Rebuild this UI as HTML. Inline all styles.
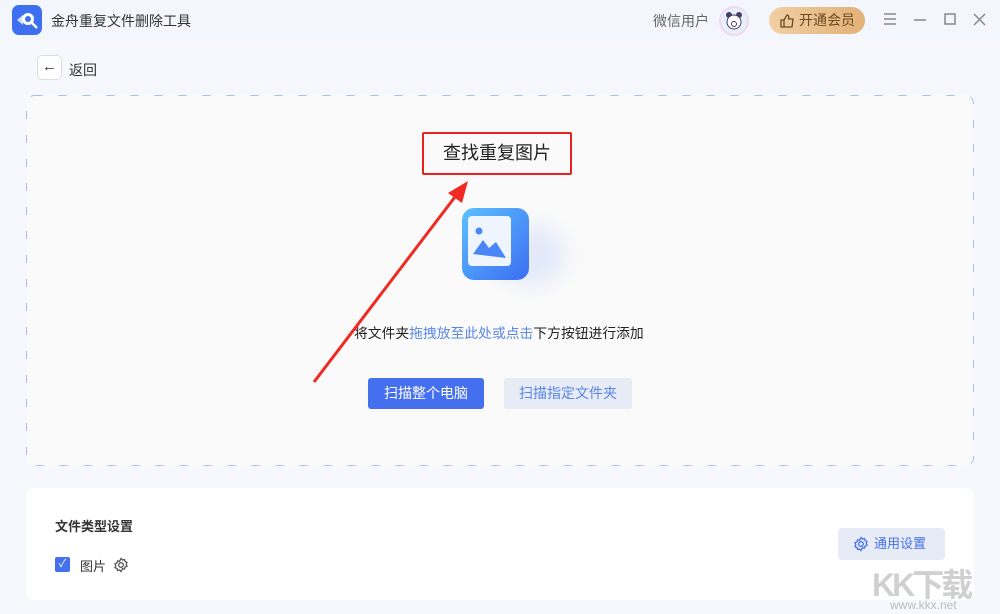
<!DOCTYPE html>
<html><head><meta charset="utf-8"><style>
*{margin:0;padding:0;box-sizing:border-box}
body{width:1000px;height:614px;background:#f6f8fd;font-family:"Liberation Sans","Noto Sans CJK SC",sans-serif;position:relative;overflow:hidden;color:#222}
.abs{position:absolute}
</style></head><body>
<div class="abs" style="left:0;top:0;width:1000px;height:40px;background:#f3f7fd"></div>
<div class="abs" style="left:12px;top:5px;width:30px;height:30px;border-radius:7px;background:#3d6ff0"></div>
<svg class="abs" style="left:12px;top:5px" width="30" height="30"><path d="M5 15 L11 10 L11 20 Z" fill="#cfe0ff"/><circle cx="16" cy="14" r="6" fill="#fff"/><circle cx="16" cy="14" r="3" fill="#3d6ff0"/><path d="M20 18 L25 23" stroke="#fff" stroke-width="2.5"/></svg>
<div class="abs" style="left:51px;top:11px;font-size:14px;color:#333">金舟重复文件删除工具</div>
<div class="abs" style="left:653px;top:11px;font-size:14px;color:#666">微信用户</div>
<div class="abs" style="left:719px;top:6px;width:30px;height:30px;border-radius:50%;background:#e4f0fb;border:2px solid #f4d8ea"></div>
<svg class="abs" style="left:719px;top:6px" width="30" height="30"><circle cx="10" cy="9" r="3" fill="#4a3a6a"/><circle cx="20" cy="9" r="3" fill="#4a3a6a"/><ellipse cx="15" cy="16" rx="7" ry="7" fill="#fff" stroke="#4a3a6a" stroke-width="1"/><circle cx="15" cy="18" r="2.5" fill="none" stroke="#4a3a6a"/></svg>
<div class="abs" style="left:769px;top:7px;width:96px;height:27px;border-radius:14px;background:linear-gradient(90deg,#f1cfa3,#e2b177);color:#6b4a22;font-size:14px;line-height:27px;padding-left:30px">开通会员</div>
<svg class="abs" style="left:779px;top:13px" width="16" height="16"><path d="M2 7h3v7H2zM5 7l3-5c2 0 2 2 1.5 4H14l-1 8H5" fill="none" stroke="#6b4a22" stroke-width="1.3"/></svg>
<svg class="abs" style="left:882px;top:12px" width="110" height="16" stroke="#888" stroke-width="1.5" fill="none"><path d="M2 2h12M2 7h12M2 12h12"/><path d="M32 8h12"/><rect x="63" y="2" width="10" height="10"/><path d="M92 2l11 11M103 2l-11 11"/></svg>
<div class="abs" style="left:37px;top:55px;width:25px;height:25px;border-radius:5px;background:#fff;border:1px solid #ddd;text-align:center;line-height:22px;font-size:15px;color:#333">←</div>
<div class="abs" style="left:69px;top:60px;font-size:14px;color:#333">返回</div>
<div class="abs" style="left:26px;top:95px;width:948px;height:371px;background:#fafafa;border-radius:8px"></div>
<svg class="abs" style="left:26px;top:95px" width="948" height="371"><rect x="0.5" y="0.5" width="947" height="370" rx="8" fill="none" stroke="#a4bdf5" stroke-dasharray="8 16"/></svg>
<div class="abs" style="left:422px;top:132px;width:150px;height:43px;border:2px solid #e8221f;border-radius:2px;text-align:center;line-height:39px;font-size:18px;color:#222">查找重复图片</div>
<div class="abs" style="left:495px;top:225px;width:70px;height:60px;border-radius:50%;background:#e3e9fa;filter:blur(10px)"></div>
<div class="abs" style="left:462px;top:208px;width:67px;height:72px;border-radius:12px;background:linear-gradient(135deg,#5cc0ff,#3c6ef2)"></div>
<div class="abs" style="left:468px;top:216px;width:43px;height:50px;border-radius:4px;background:#eef5ff"></div>
<svg class="abs" style="left:468px;top:216px" width="43" height="50"><circle cx="11" cy="15" r="3.5" fill="#4a86f5"/><path d="M5 38 L15 24 L21 32 L28 26 L38 42 Z" fill="#4a86f5"/></svg>
<div class="abs" style="left:354px;top:322px;font-size:13.8px;color:#222;white-space:nowrap">将文件夹<span style="color:#5b86e5">拖拽放至此处或点击</span>下方按钮进行添加</div>
<div class="abs" style="left:368px;top:378px;width:116px;height:31px;border-radius:3px;background:#4470ef;color:#fff;font-size:14px;text-align:center;line-height:31px">扫描整个电脑</div>
<div class="abs" style="left:504px;top:378px;width:128px;height:31px;border-radius:3px;background:#e6ebf5;color:#5b86e5;font-size:14px;text-align:center;line-height:31px">扫描指定文件夹</div>
<svg class="abs" style="left:300px;top:175px" width="180" height="215"><path d="M14 207 L158 18" stroke="#ee2a22" stroke-width="3"/><path d="M168 6 L148 18 L162 28 Z" fill="#ee2a22"/></svg>
<div class="abs" style="left:26px;top:488px;width:948px;height:112px;border-radius:8px;background:#fff"></div>
<div class="abs" style="left:55px;top:516px;font-size:13px;font-weight:bold;color:#333">文件类型设置</div>
<div class="abs" style="left:55px;top:557px;width:15px;height:15px;border-radius:2px;background:#4470ef;color:#fff;font-size:11px;text-align:center;line-height:15px">✓</div>
<div class="abs" style="left:80px;top:556px;font-size:13px;color:#333">图片</div>
<svg class="abs" style="left:113px;top:557px" width="16" height="16" fill="none" stroke="#555" stroke-width="1.3"><path d="M8 1.5l1.5 1.5 2-0.5 .5 2 2 .8-.8 2 .8 2-2 .8-.5 2-2-.5L8 14.5 6.5 13l-2 .5-.5-2-2-.8.8-2-.8-2 2-.8.5-2 2 .5z"/><circle cx="8" cy="8" r="2.3"/></svg>
<div class="abs" style="left:838px;top:528px;width:107px;height:32px;border-radius:4px;background:#e6ebf5;color:#4470ef;font-size:13px;line-height:32px;padding-left:36px">通用设置</div>
<svg class="abs" style="left:853px;top:536px" width="16" height="16" fill="none" stroke="#4470ef" stroke-width="1.3"><path d="M8 1.5l1.5 1.5 2-0.5 .5 2 2 .8-.8 2 .8 2-2 .8-.5 2-2-.5L8 14.5 6.5 13l-2 .5-.5-2-2-.8.8-2-.8-2 2-.8.5-2 2 .5z"/><circle cx="8" cy="8" r="2.3"/></svg>
<div class="abs" style="left:922px;top:560px;font-size:32px;font-weight:bold;color:#d0d0d0;letter-spacing:-3px;white-space:nowrap;transform:translateX(-50px)">KK下载</div>
<div class="abs" style="left:890px;top:598px;font-size:12px;color:#bbb">www.kkx.net</div>
</body></html>
